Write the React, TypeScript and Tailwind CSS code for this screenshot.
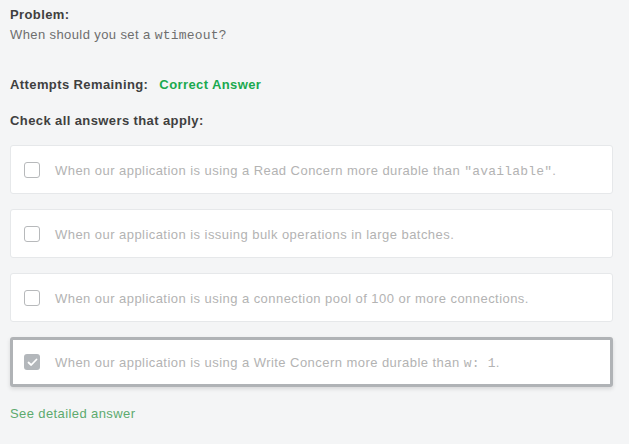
import React from "react";

const mono = { fontFamily: '"Liberation Mono", "DejaVu Sans Mono", monospace', letterSpacing: "0.2px" };

function Check({ checked }: { checked?: boolean }) {
  if (checked) {
    return (
      <div className="w-4 h-4 rounded-[3px] bg-[#b3b7bb] flex items-center justify-center shrink-0">
        <svg width="11" height="9" viewBox="0 0 11 9" fill="none">
          <path d="M1.5 4.5 L4.2 7 L9.5 1.5" stroke="#fff" strokeWidth="1.8" strokeLinecap="round" strokeLinejoin="round" />
        </svg>
      </div>
    );
  }
  return <div className="w-4 h-4 rounded-[3px] border-[1.5px] border-[#b7b9bb] bg-white shrink-0" />;
}

function Option({ children, checked }: { children: React.ReactNode; checked?: boolean }) {
  return (
    <div
      className={
        checked
          ? "h-[50px] flex items-center pl-[11px] rounded-[3px] bg-white border-[3px] border-[#b0b3b6] shadow-[0_2px_4px_rgba(0,0,0,0.12)]"
          : "h-[49px] flex items-center pl-[13px] rounded-[3px] bg-white border border-[#e6e8ea]"
      }
    >
      <Check checked={checked} />
      <div className="ml-[15px] text-[13px] text-[#b3b3b3] leading-none whitespace-nowrap tracking-[0.45px] pt-[2px]">{children}</div>
    </div>
  );
}

export default function App() {
  return (
    <div
      className="w-[629px] h-[444px] bg-[#f4f5f6] pl-[10px] pr-[16px] pt-[7px] overflow-hidden"
      style={{ fontFamily: '"Liberation Sans", Arial, sans-serif' }}
    >
      <div className="text-[13px] font-bold text-[#3f3f3f] leading-[16px] tracking-[0.4px]">Problem:</div>
      <div className="text-[13px] text-[#6e6e6e] leading-[20px] mt-[2px] tracking-[0.4px]">
        When should you set a <span style={mono}>wtimeout</span>?
      </div>
      <div className="mt-[31px] text-[13px] font-bold text-[#3f3f3f] leading-[16px] flex gap-[11px] tracking-[0.4px]">
        <span>Attempts Remaining:</span>
        <span className="text-[#1aa94f]">Correct Answer</span>
      </div>
      <div className="mt-[20px] text-[13px] font-bold text-[#3f3f3f] leading-[16px] tracking-[0.4px]">Check all answers that apply:</div>
      <div className="mt-[16px] flex flex-col gap-[15px]">
        <Option>
          When our application is using a Read Concern more durable than <span style={mono}>"available"</span>.
        </Option>
        <Option>When our application is issuing bulk operations in large batches.</Option>
        <Option>When our application is using a connection pool of 100 or more connections.</Option>
        <Option checked>
          When our application is using a Write Concern more durable than <span style={mono}>w: 1</span>.
        </Option>
      </div>
      <div className="mt-[19px] text-[13px] text-[#5daa6e] leading-[16px] tracking-[0.4px]">See detailed answer</div>
    </div>
  );
}
